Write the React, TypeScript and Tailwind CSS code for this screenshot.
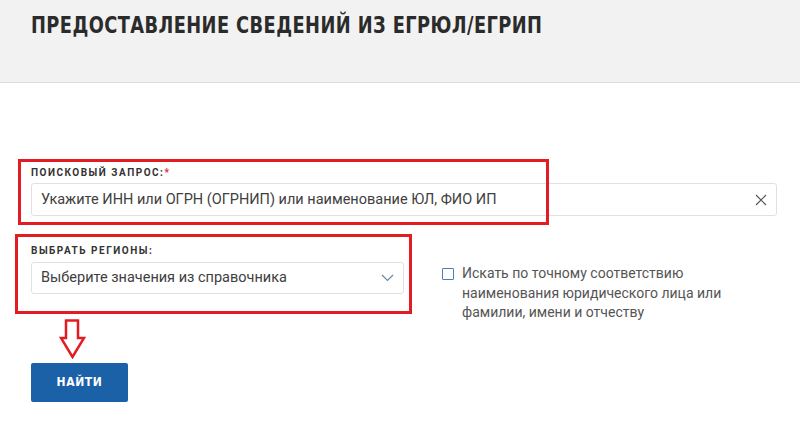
import React from 'react';

const Label = ({ children, required }: { children: React.ReactNode; required?: boolean }) => (
  <div className="font-['Roboto',sans-serif] text-[10px] font-bold tracking-[1.5px] text-[#333] leading-[14px] uppercase">
    {children}
    {required && <span className="text-[#e3262c]">*</span>}
  </div>
);

const App = () => {
  return (
    <div className="relative w-[800px] h-[425px] bg-white overflow-hidden font-['Roboto',sans-serif]">
      <header className="h-[83px] bg-[#f2f2f2] border-b border-[#dcdcdc] px-[31px] pt-[11px]">
        <h1 className="inline-block origin-left scale-x-[0.86] whitespace-nowrap font-['DejaVu_Sans_Condensed',sans-serif] font-bold text-[23px] leading-[28px] text-[#2b2b2b] tracking-[0.5px]">
          ПРЕДОСТАВЛЕНИЕ СВЕДЕНИЙ ИЗ ЕГРЮЛ/ЕГРИП
        </h1>
      </header>

      <div className="px-[31px] pt-[83px]">
        <Label required>Поисковый запрос:</Label>
        <div className="mt-[3px] flex items-center h-[33px] w-[746px] border border-[#e1e1e1] rounded-[3px] pl-[9px] pr-[9px]">
          <span className="flex-1 text-[14.5px] text-[#404040]">
            Укажите ИНН или ОГРН (ОГРНИП) или наименование ЮЛ, ФИО ИП
          </span>
          <svg width="12" height="12" viewBox="0 0 12 12" className="text-[#555]">
            <path d="M1 1L11 11M11 1L1 11" stroke="currentColor" strokeWidth="1.2" fill="none" />
          </svg>
        </div>

        <div className="mt-[28px] flex items-start">
          <div className="w-[373px]">
            <Label>Выбрать регионы:</Label>
            <div className="mt-[4px] flex items-center h-[32px] border border-[#e1e1e1] rounded-[3px] pl-[9px] pr-[9px]">
              <span className="flex-1 text-[14.5px] text-[#404040]">Выберите значения из справочника</span>
              <svg width="13" height="8" viewBox="0 0 13 8" className="text-[#6a87a8]">
                <path d="M1 1L6.5 6.5L12 1" stroke="currentColor" strokeWidth="1.2" fill="none" />
              </svg>
            </div>
          </div>
          <div className="ml-[38px] mt-[20px] flex items-start">
            <div className="mt-[4px] w-[12px] h-[12px] border-[1.5px] border-[#4c7cb8] rounded-[1px] shrink-0" />
            <div className="ml-[8px] text-[14px] leading-[19.5px] text-[#555] w-[280px]">
              Искать по точному соответствию наименования юридического лица или фамилии, имени и отчеству
            </div>
          </div>
        </div>

        <button className="mt-[40px] w-[97px] h-[39px] bg-[#1b61a8] rounded-[2px] text-white font-['DejaVu_Sans_Condensed',sans-serif] font-bold text-[12px] tracking-[0.6px]">
          НАЙТИ
        </button>
      </div>

      {/* annotation overlays */}
      <div className="absolute left-[18px] top-[159px] w-[531px] h-[66px] border-[3px] border-[#e31b23]" />
      <div className="absolute left-[15px] top-[234px] w-[397px] h-[80px] border-[3px] border-[#e31b23]" />
      <svg className="absolute left-[59px] top-[319px]" width="27" height="40" viewBox="0 0 27 40">
        <path d="M7 1.5H19V19H25L13.5 38L2 19H7Z" fill="white" stroke="#e31b23" strokeWidth="2.5" strokeLinejoin="miter" />
      </svg>
    </div>
  );
};

export default App;
